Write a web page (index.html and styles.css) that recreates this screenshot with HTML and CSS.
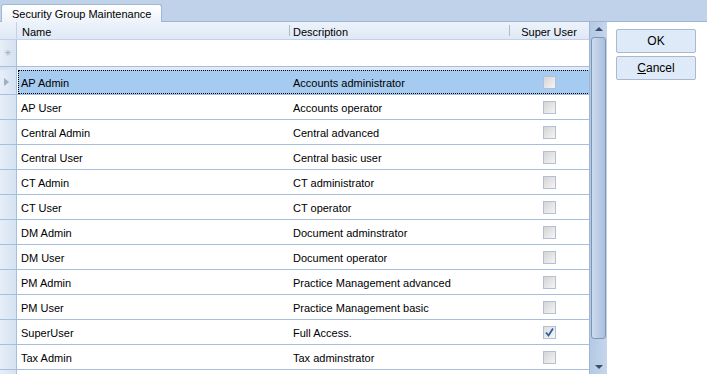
FILE: index.html
```html
<!DOCTYPE html>
<html>
<head>
<meta charset="utf-8">
<link rel="stylesheet" href="styles.css">
</head>
<body>
<div class="app">
  <div class="tabstrip">
    <div class="tab">Security Group Maintenance</div>
  </div>
  <div class="main">
    <div class="grid">
      <div class="table">
        <div class="hrow">
          <div class="hcell corner"></div>
          <div class="hcell">Name</div>
          <div class="hcell sep">Description</div>
          <div class="hcell sep right">Super User</div>
        </div>
        <div class="row newrow">
          <div class="rh"><span class="star">✳</span></div>
          <div class="cell"></div>
          <div class="cell"></div>
          <div class="cell"></div>
        </div>
        <div class="divider"><div class="rhgap"></div><div class="dgap"></div></div>
        <div class="row selected">
          <div class="rh"><span class="arrow"></span></div>
          <div class="cells"><div class="cell">AP Admin</div><div class="cell desc">Accounts administrator</div><div class="cell chk"><span class="box"></span></div></div>
        </div>
        <div class="row"><div class="rh"></div><div class="cells"><div class="cell">AP User</div><div class="cell desc">Accounts operator</div><div class="cell chk"><span class="box"></span></div></div></div>
        <div class="row"><div class="rh"></div><div class="cells"><div class="cell">Central Admin</div><div class="cell desc">Central advanced</div><div class="cell chk"><span class="box"></span></div></div></div>
        <div class="row"><div class="rh"></div><div class="cells"><div class="cell">Central User</div><div class="cell desc">Central basic user</div><div class="cell chk"><span class="box"></span></div></div></div>
        <div class="row"><div class="rh"></div><div class="cells"><div class="cell">CT Admin</div><div class="cell desc">CT administrator</div><div class="cell chk"><span class="box"></span></div></div></div>
        <div class="row"><div class="rh"></div><div class="cells"><div class="cell">CT User</div><div class="cell desc">CT operator</div><div class="cell chk"><span class="box"></span></div></div></div>
        <div class="row"><div class="rh"></div><div class="cells"><div class="cell">DM Admin</div><div class="cell desc">Document adminstrator</div><div class="cell chk"><span class="box"></span></div></div></div>
        <div class="row"><div class="rh"></div><div class="cells"><div class="cell">DM User</div><div class="cell desc">Document operator</div><div class="cell chk"><span class="box"></span></div></div></div>
        <div class="row"><div class="rh"></div><div class="cells"><div class="cell">PM Admin</div><div class="cell desc">Practice Management advanced</div><div class="cell chk"><span class="box"></span></div></div></div>
        <div class="row"><div class="rh"></div><div class="cells"><div class="cell">PM User</div><div class="cell desc">Practice Management basic</div><div class="cell chk"><span class="box"></span></div></div></div>
        <div class="row"><div class="rh"></div><div class="cells"><div class="cell">SuperUser</div><div class="cell desc">Full Access.</div><div class="cell chk"><span class="box checked"><svg width="11" height="11" viewBox="0 0 11 11"><path d="M2 5.5 L4.5 8.5 L9 1.5" fill="none" stroke="#2f5ea8" stroke-width="1.8"/></svg></span></div></div></div>
        <div class="row"><div class="rh"></div><div class="cells"><div class="cell">Tax Admin</div><div class="cell desc">Tax adminstrator</div><div class="cell chk"><span class="box"></span></div></div></div>
        <div class="row"><div class="rh"></div><div class="cells"><div class="cell"></div><div class="cell desc"></div><div class="cell chk"></div></div></div>
      </div>
      <div class="scrollbar">
        <div class="sbtn"><span class="up"></span></div>
        <div class="thumb"></div>
        <div class="track"></div>
        <div class="sbtn"><span class="down"></span></div>
      </div>
    </div>
    <div class="side">
      <button class="btn">OK</button>
      <button class="btn"><u>C</u>ancel</button>
    </div>
  </div>
</div>
</body>
</html>
```

FILE: styles.css
```css
html, body {
  margin: 0;
  padding: 0;
  background: #ffffff;
}
body {
  width: 707px;
  height: 374px;
  overflow: hidden;
  font-family: "Liberation Sans", Arial, sans-serif;
  font-size: 11px;
  color: #000;
}
.app {
  display: flex;
  flex-direction: column;
  height: 374px;
}
.tabstrip {
  height: 21px;
  background: #bfd2e9;
  border-bottom: 1px solid #9eb5d2;
  display: flex;
  align-items: flex-end;
  padding-left: 1px;
  flex-shrink: 0;
}
.tab {
  height: 17px;
  margin-bottom: -1px;
  background: linear-gradient(#ffffff, #eef3fa);
  border: 1px solid #a2b8d4;
  border-bottom: none;
  border-radius: 3px 3px 0 0;
  line-height: 18px;
  padding: 0 10px;
  white-space: nowrap;
}
.main {
  display: flex;
  flex: 1;
  min-height: 0;
}
.grid {
  display: flex;
  width: 607px;
  flex-shrink: 0;
}
.table {
  width: 589px;
  display: flex;
  flex-direction: column;
  overflow: hidden;
}
.hrow {
  display: grid;
  grid-template-columns: 17px 272px 220px 80px;
  height: 17px;
  background: linear-gradient(#edf3fb, #dfe8f5);
  border-bottom: 1px solid #c3d2e6;
  flex-shrink: 0;
}
.hcell {
  position: relative;
  line-height: 14px;
  padding-top: 3px;
  padding-left: 5px;
  white-space: nowrap;
}
.hcell.corner {
  padding: 0;
  border-right: 1px solid #c3d2e6;
}
.hcell.sep::before {
  content: "";
  position: absolute;
  left: 0;
  top: 3px;
  height: 11px;
  border-left: 1px solid #a9bcd6;
}
.hcell.sep { padding-left: 4px; }
.hcell.right { padding-left: 0; text-align: center; }
.row {
  display: flex;
  height: 24px;
  border-bottom: 1px solid #a7bfdf;
  flex-shrink: 0;
}
.row.newrow {
  display: grid;
  grid-template-columns: 17px 272px 220px 80px;
  height: 26px;
}
.rh {
  width: 16px;
  flex-shrink: 0;
  background: linear-gradient(90deg, #e6eef8, #d6e2f2);
  border-right: 1px solid #a7bfdf;
  display: flex;
  align-items: center;
  justify-content: center;
}
.star {
  color: #9aa9bd;
  font-size: 9px;
  line-height: 1;
}
.arrow {
  width: 0;
  height: 0;
  border-top: 4px solid transparent;
  border-bottom: 4px solid transparent;
  border-left: 5px solid #9eaec4;
  margin-left: -4px;
}
.divider {
  display: flex;
  height: 3px;
  flex-shrink: 0;
}
.rhgap {
  width: 16px;
  background: #d6e2f2;
  border-right: 1px solid #a7bfdf;
}
.dgap {
  flex: 1;
  background: #e1eaf6;
}
.cells {
  flex: 1;
  display: grid;
  grid-template-columns: 272px 220px 80px;
  box-sizing: border-box;
  border: 1px solid transparent;
  margin-left: 1px;
}
.selected .cells {
  background: #a6cbf0;
  border: 1px dotted #000;
}
.cell {
  line-height: 20px;
  padding-top: 2px;
  padding-left: 2px;
  white-space: nowrap;
}
.cell.chk {
  display: flex;
  align-items: center;
  padding: 0 0 0 32px;
}
.box {
  width: 11px;
  height: 11px;
  border: 1px solid #b1c0d6;
  background: linear-gradient(135deg, #d4d4d4, #f5f5f5);
  display: flex;
  align-items: center;
  justify-content: center;
}
.box.checked { background: linear-gradient(135deg, #dcdcdc, #f7f7f7); }
.scrollbar {
  width: 17px;
  display: flex;
  flex-direction: column;
  background: linear-gradient(90deg, #b5c9e4, #c5d6ec);
  border-left: 1px solid #9fb5d3;
}
.sbtn {
  height: 14px;
  display: flex;
  align-items: center;
  justify-content: center;
  flex-shrink: 0;
}
.up {
  width: 0; height: 0;
  border-left: 4px solid transparent;
  border-right: 4px solid transparent;
  border-bottom: 4px solid #3b4d6a;
}
.down {
  width: 0; height: 0;
  border-left: 4px solid transparent;
  border-right: 4px solid transparent;
  border-top: 4px solid #3b4d6a;
}
.thumb {
  height: 300px;
  margin: 1px 1px 0 1px;
  border: 1px solid #7d95b7;
  border-radius: 3px;
  background: linear-gradient(90deg, #cddbee, #a9c0de);
  flex-shrink: 0;
}
.track { flex: 1; }
.side {
  flex: 1;
  display: flex;
  flex-direction: column;
  gap: 3px;
  padding: 7px 0 0 9px;
}
.btn {
  width: 80px;
  height: 24px;
  font-family: "Liberation Sans", Arial, sans-serif;
  font-size: 12px;
  color: #000;
  background: #dfeaf8;
  border: 1px solid #aab9cf;
  border-radius: 2px;
  padding: 0;
}
```
